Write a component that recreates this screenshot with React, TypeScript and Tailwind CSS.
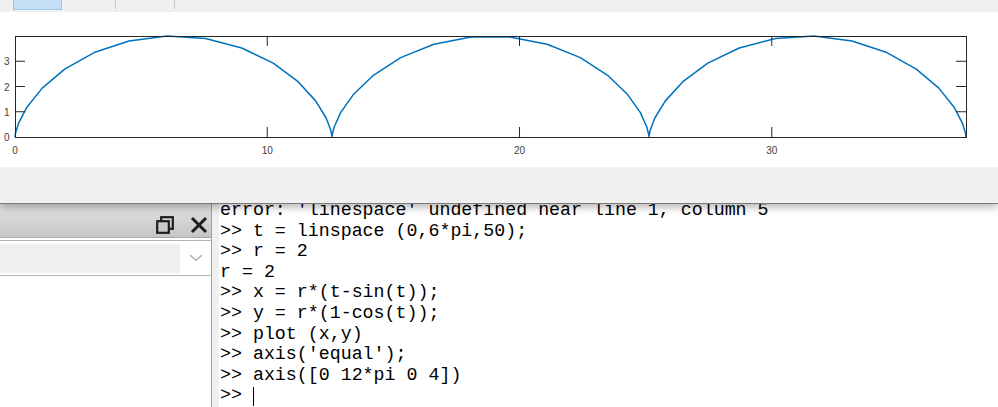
import React from "react";

// cycloid plot data: t = linspace(0, 6*pi, 50), r = 2
const N = 50;
const X0 = 15;
const X1 = 966;
const Y0 = 137;
const Y1 = 36;
const sx = (v: number) => X0 + (v * (X1 - X0)) / (12 * Math.PI);
const sy = (v: number) => Y0 - (v * (Y0 - Y1)) / 4;

const points = Array.from({ length: N }, (_, i) => {
  const t = (i * 6 * Math.PI) / (N - 1);
  const x = 2 * (t - Math.sin(t));
  const y = 2 * (1 - Math.cos(t));
  return `${sx(x).toFixed(2)},${sy(y).toFixed(2)}`;
}).join(" ");

const lines = [
  "error: 'linespace' undefined near line 1, column 5",
  ">> t = linspace (0,6*pi,50);",
  ">> r = 2",
  "r = 2",
  ">> x = r*(t-sin(t));",
  ">> y = r*(1-cos(t));",
  ">> plot (x,y)",
  ">> axis('equal');",
  ">> axis([0 12*pi 0 4])",
];

function Plot() {
  const xt = [10, 20, 30];
  const yt = [1, 2, 3];
  return (
    <svg width="998" height="155" viewBox="0 12 998 155" className="block">
      <polyline points={points} fill="none" stroke="#0072BD" strokeWidth="1.5" strokeLinejoin="round" />
      <rect x={X0 + 0.5} y={Y1 + 0.5} width={X1 - X0} height={Y0 - Y1} fill="none" stroke="#262626" strokeWidth="1" />
      {xt.map((v) => (
        <g key={v}>
          <line x1={sx(v)} x2={sx(v)} y1={Y0} y2={Y0 - 10} stroke="#262626" strokeWidth="1" />
          <line x1={sx(v)} x2={sx(v)} y1={Y1} y2={Y1 + 10} stroke="#262626" strokeWidth="1" />
        </g>
      ))}
      {yt.map((v) => (
        <g key={v}>
          <line x1={X0} x2={X0 + 10} y1={sy(v)} y2={sy(v)} stroke="#262626" strokeWidth="1" />
          <line x1={X1} x2={X1 - 10} y1={sy(v)} y2={sy(v)} stroke="#262626" strokeWidth="1" />
        </g>
      ))}
      <g fill="#404040" fontSize="10" fontFamily="Liberation Sans, Arial, sans-serif">
        {[0, ...xt].map((v) => (
          <text key={v} x={sx(v)} y={154} textAnchor="middle">
            {v}
          </text>
        ))}
        {[0, ...yt].map((v) => (
          <text key={v} x={9.5} y={sy(v) + 4} textAnchor="end">
            {v}
          </text>
        ))}
      </g>
    </svg>
  );
}

export default function App() {
  return (
    <div className="w-[998px] h-[407px] overflow-hidden bg-white flex flex-col">
      {/* figure window */}
      <div className="relative z-10 h-[204px] shrink-0 flex flex-col bg-[#f0f0f0] border-b border-[#7a7a7a] shadow-[0_3px_8px_rgba(0,0,0,0.3)]">
        <div className="h-[12px] flex items-start">
          <div className="ml-[13px] w-[49px] h-[10px] bg-[#c4dff6] border border-t-0 border-[#90c8f6]" />
          <div className="ml-[53px] w-px h-[9px] bg-[#c8c8c8]" />
          <div className="ml-[58px] w-px h-[9px] bg-[#c8c8c8]" />
        </div>
        <div className="h-[155px] bg-white">
          <Plot />
        </div>
      </div>

      {/* bottom: file panel + command window */}
      <div className="flex flex-1 min-h-0">
        <div className="w-[212px] shrink-0 flex flex-col border-r border-[#a0a0a0]">
          <div className="h-[34px] flex items-end justify-end gap-[16px] pr-[3px] pb-[3px] bg-gradient-to-b from-[#e2e2e2] to-[#c6c6c6] border-b border-[#a8a8a8]">
            <svg width="18" height="18" viewBox="0 0 18 18">
              <rect x="5.2" y="1.2" width="11.6" height="11.6" fill="none" stroke="#1e1e1e" strokeWidth="2.2" />
              <rect x="1.2" y="5.2" width="11.6" height="11.6" fill="#cbcbcb" stroke="#1e1e1e" strokeWidth="2.2" />
            </svg>
            <svg width="18" height="18" viewBox="0 0 18 18">
              <path d="M2 2 L16 16 M16 2 L2 16" stroke="#1e1e1e" strokeWidth="3" />
            </svg>
          </div>
          <div className="mt-[2px] h-[36px] border-y border-[#b4b4b4] bg-white flex items-center">
            <div className="w-[180px] h-[29px] bg-[#efefef]" />
            <svg width="14" height="8" viewBox="0 0 14 8" className="ml-[9px]">
              <path d="M1 1 L7 6.5 L13 1" fill="none" stroke="#a8a8a8" strokeWidth="1.2" />
            </svg>
          </div>
          <div className="flex-1 bg-white" />
        </div>
        <div className="w-[7px] shrink-0 bg-[#f0f0f0]" />
        <div className="flex-1 min-w-0 bg-white pl-[1px]">
          <pre className="mt-[-4px] font-['Liberation_Mono','Courier_New',monospace] text-[18.3px] leading-[20.6px] text-black whitespace-pre">
            {lines.map((l) => (
              <div key={l}>{l}</div>
            ))}
            <div>
              {">> "}
              <span className="inline-block w-px h-[19px] bg-black align-[-6px]" />
            </div>
          </pre>
        </div>
      </div>
    </div>
  );
}
